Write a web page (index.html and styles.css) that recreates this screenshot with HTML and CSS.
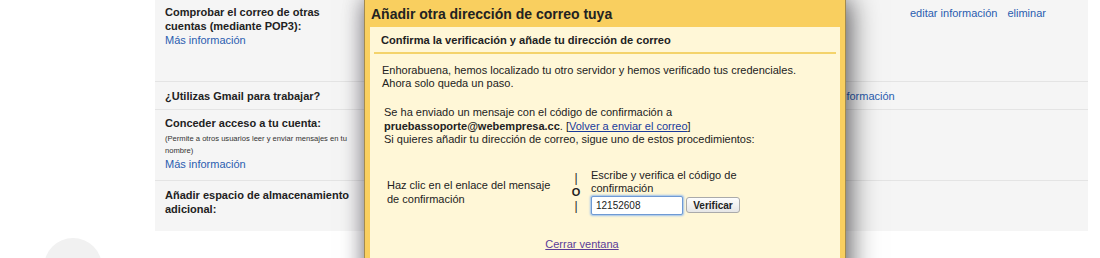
FILE: index.html
```html
<!DOCTYPE html>
<html lang="es">
<head>
<meta charset="utf-8">
<title>Cuentas</title>
<link rel="stylesheet" href="styles.css">
</head>
<body>
<div class="page">
  <div class="panel">
    <div class="row row1">
      <div class="label">
        <div class="title">Comprobar el correo de otras cuentas (mediante POP3):</div>
        <a class="link" href="#">Más información</a>
      </div>
      <div class="value">
        <div class="actions"><a class="link" href="#">editar información</a><a class="link" href="#">eliminar</a></div>
      </div>
    </div>
    <div class="row row2">
      <div class="label"><div class="title">¿Utilizas Gmail para trabajar?</div></div>
      <div class="value"><a class="link" href="#">Más información</a></div>
    </div>
    <div class="row row3">
      <div class="label">
        <div class="title">Conceder acceso a tu cuenta:</div>
        <div class="small">(Permite a otros usuarios leer y enviar mensajes en tu nombre)</div>
        <a class="link" href="#">Más información</a>
      </div>
      <div class="value"></div>
    </div>
    <div class="row row4">
      <div class="label"><div class="title">Añadir espacio de almacenamiento adicional:</div></div>
      <div class="value"></div>
    </div>
  </div>
  <div class="avatar"></div>
</div>

<div class="dialog">
  <div class="dlg-title">Añadir otra dirección de correo tuya</div>
  <div class="dlg-body">
    <div class="dlg-sub">Confirma la verificación y añade tu dirección de correo</div>
    <div class="dlg-content">
      <p class="p1">Enhorabuena, hemos localizado tu otro servidor y hemos verificado tus credenciales.<br>Ahora solo queda un paso.</p>
      <p class="p2">Se ha enviado un mensaje con el código de confirmación a<br><b>pruebassoporte@webempresa.cc</b>. [<a class="ulink" href="#">Volver a enviar el correo</a>]<br>Si quieres añadir tu dirección de correo, sigue uno de estos procedimientos:</p>
      <div class="choices">
        <div class="choice-left">Haz clic en el enlace del mensaje de confirmación</div>
        <div class="choice-sep"><span>|</span><b>O</b><span>|</span></div>
        <div class="choice-right">
          <div class="cr-text">Escribe y verifica el código de confirmación</div>
          <div class="cr-form"><input class="code" type="text" value="12152608"><button class="btn" type="button">Verificar</button></div>
        </div>
      </div>
      <div class="close"><a class="vlink" href="#">Cerrar ventana</a></div>
    </div>
  </div>
</div>
</body>
</html>
```

FILE: styles.css
```css
* { box-sizing: border-box; }
html, body { margin: 0; padding: 0; background: #fff; overflow: hidden; }
body {
  width: 1100px;
  height: 258px;
  font-family: "Liberation Sans", Arial, Helvetica, sans-serif;
  font-size: 11px;
  color: #222;
  position: relative;
}
.page { padding-left: 155px; }
.panel {
  width: 933px;
  height: 231px;
  background: #f5f5f5;
}
.row {
  display: flex;
  border-bottom: 1px solid #e4e4e4;
}
.row1 { height: 82px; }
.row2 { height: 28px; }
.row3 { height: 71px; }
.row4 { height: 50px; border-bottom: none; }
.label {
  width: 200px;
  padding: 5px 0 0 10px;
  line-height: 14px;
}
.row2 .label { padding-top: 7px; }
.row3 .label { padding-top: 6px; }
.row4 .label { padding-top: 7px; }
.title { font-weight: bold; color: #222; }
.link { color: #2a5db0; text-decoration: none; }
.small { font-size: 7.6px; line-height: 12px; color: #333; margin-top: 3px; }
.value { flex: 1; padding: 6px 0 0 0; line-height: 14px; color: #222; }
.row2 .value { padding: 7px 0 0 459px; white-space: nowrap; }
.actions { padding-left: 555px; }
.actions .link { margin-right: 10px; }
.avatar {
  width: 58px;
  height: 58px;
  border-radius: 50%;
  background: #f1f1f1;
  margin: 7px 0 0 -111px;
}

.dialog {
  position: absolute;
  left: 364px;
  top: 0;
  width: 482px;
  height: 290px;
  background: #f9cf5f;
  border: 1px solid #a38a4e;
  border-top: none;
  box-shadow: 6px 0 26px rgba(0, 0, 0, 0.5), -2px 0 18px rgba(40, 30, 60, 0.3);
}
.dlg-title {
  height: 27px;
  padding: 6px 0 0 6px;
  font-size: 14px;
  line-height: 16px;
  font-weight: bold;
  color: #222;
}
.dlg-body {
  margin: 0 5px;
  background: #fff7d7;
  height: 270px;
}
.dlg-sub {
  margin: 0 4px;
  padding: 7px 7px 0 7px;
  height: 27px;
  font-weight: bold;
  font-size: 11.1px;
  line-height: 13px;
  border-bottom: 2px solid #f4d36b;
}
.dlg-content { padding: 10px 0 0 12px; line-height: 13px; color: #222; }
.dlg-content p { margin: 0; }
.p2 { margin-top: 16px !important; padding-left: 2px; line-height: 13.5px; }
.ulink { color: #1a3a9c; text-decoration: underline; }
.vlink { color: #5b3d98; text-decoration: underline; }
.choices {
  display: flex;
  align-items: flex-start;
  margin-top: 22px;
  padding-left: 5px;
}
.choice-left { width: 168px; line-height: 14px; padding-top: 9px; }
.choice-sep {
  width: 26px;
  margin-left: 8px;
  display: flex;
  flex-direction: column;
  align-items: center;
  line-height: 14px;
  font-size: 12px;
  color: #222;
  padding-top: 2px;
}
.choice-sep b { font-size: 11px; }
.choice-right { width: 172px; line-height: 13px; padding-left: 2px; }
.cr-form { display: flex; align-items: center; margin-top: 1px; }
.code {
  width: 92px;
  height: 19px;
  padding: 1px 4px;
  font-family: "Liberation Sans", Arial, sans-serif;
  font-size: 10px;
  color: #222;
  border: 1px solid #6e9ad4;
  box-shadow: 0 0 2px 1px #9cc0ec;
  border-radius: 2px;
  background: #fff;
  outline: none;
}
.btn {
  margin-left: 3px;
  height: 16px;
  width: 54px;
  padding: 0;
  font-family: "Liberation Sans", Arial, sans-serif;
  font-size: 10px;
  font-weight: bold;
  color: #222;
  border: 1px solid #aaa;
  border-radius: 3px;
  background: linear-gradient(#fdfdfd, #e6e6e6);
}
.close { text-align: center; margin-top: 23px; padding-right: 58px; }
```
